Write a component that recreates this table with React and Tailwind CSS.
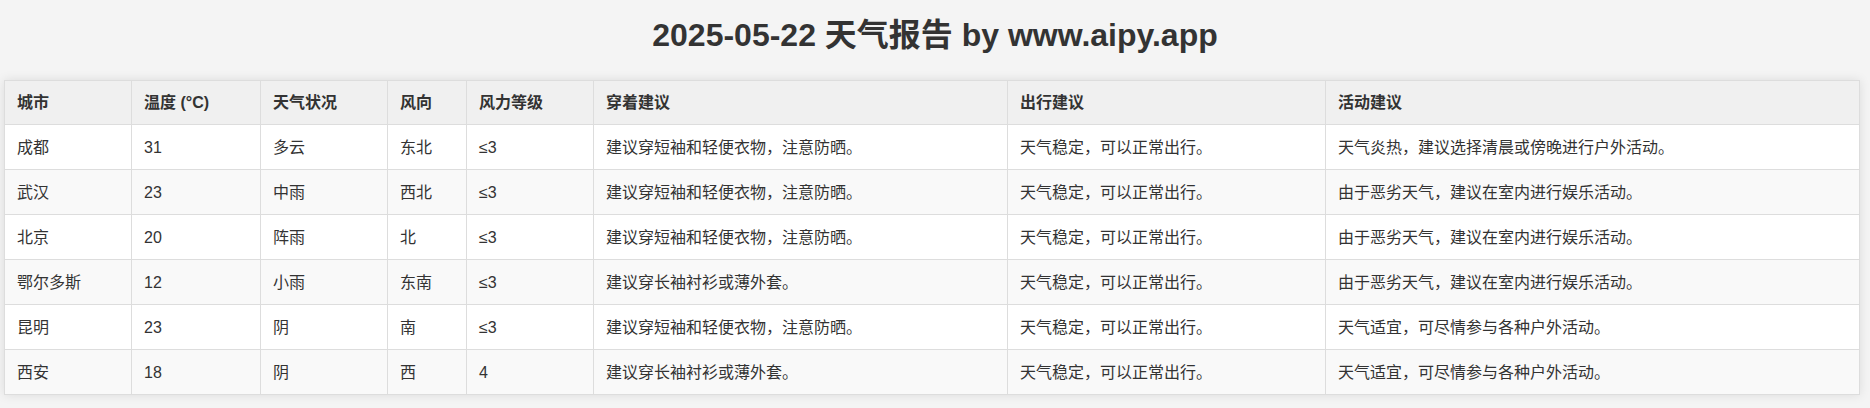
const headers = ['城市', '温度 (°C)', '天气状况', '风向', '风力等级', '穿着建议', '出行建议', '活动建议'];

const widths = ['w-[127px]', 'w-[129px]', 'w-[127px]', 'w-[79px]', 'w-[127px]', 'w-[414px]', 'w-[318px]', 'w-[534px]'];

const SHORT = '建议穿短袖和轻便衣物，注意防晒。';
const LONG = '建议穿长袖衬衫或薄外套。';
const GO = '天气稳定，可以正常出行。';
const BAD = '由于恶劣天气，建议在室内进行娱乐活动。';
const NICE = '天气适宜，可尽情参与各种户外活动。';

const rows = [
  ['成都', '31', '多云', '东北', '≤3', SHORT, GO, '天气炎热，建议选择清晨或傍晚进行户外活动。'],
  ['武汉', '23', '中雨', '西北', '≤3', SHORT, GO, BAD],
  ['北京', '20', '阵雨', '北', '≤3', SHORT, GO, BAD],
  ['鄂尔多斯', '12', '小雨', '东南', '≤3', LONG, GO, BAD],
  ['昆明', '23', '阴', '南', '≤3', SHORT, GO, NICE],
  ['西安', '18', '阴', '西', '4', LONG, GO, NICE],
];

export default function App() {
  return (
    <div className="min-h-screen bg-[#f4f4f4] text-[#333] font-['Liberation_Sans','Noto_Sans_CJK_SC',sans-serif]">
      <div className="h-[80px] pt-[17px]">
        <h1 className="text-center text-[32px] font-bold leading-[37px] text-[#333]">
          2025-05-22 天气报告 by www.aipy.app
        </h1>
      </div>
      <table className="ml-[4px] w-[1855px] table-fixed border-collapse bg-white shadow-[0_0_10px_rgba(0,0,0,0.1)]">
        <colgroup>
          {widths.map((w, i) => (
            <col key={i} className={w} />
          ))}
        </colgroup>
        <thead>
          <tr className="bg-[#f0f0f0]">
            {headers.map((h) => (
              <th key={h} className="h-[44px] border border-[#ddd] px-3 py-0 text-left text-[16px] font-bold leading-[20px]">
                {h}
              </th>
            ))}
          </tr>
        </thead>
        <tbody>
          {rows.map((r, i) => (
            <tr key={i} className={i % 2 === 1 ? 'bg-[#f9f9f9]' : 'bg-white'}>
              {r.map((c, j) => (
                <td key={j} className="h-[45px] border border-[#ddd] px-3 py-0 text-[16px] leading-[21px]">
                  {c}
                </td>
              ))}
            </tr>
          ))}
        </tbody>
      </table>
    </div>
  );
}
